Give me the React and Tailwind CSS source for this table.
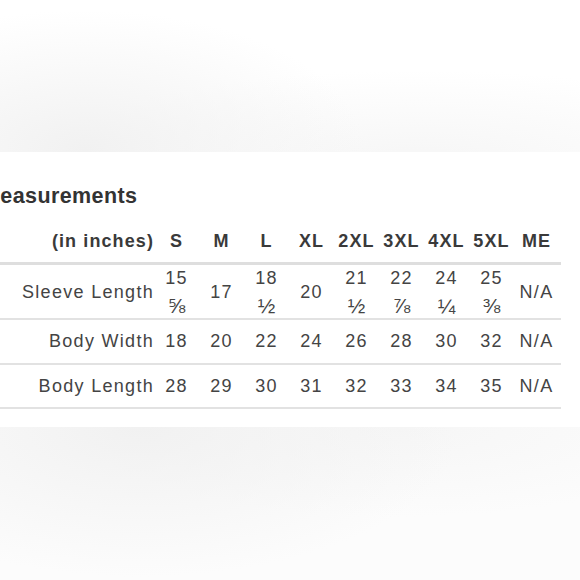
import React from "react";

const sizes = ["S", "M", "L", "XL", "2XL", "3XL", "4XL", "5XL", "ME"];

const rows = [
  {
    label: "Sleeve Length",
    h: "h-[55px] border-b-2",
    values: [
      ["15", "⅝"],
      ["17"],
      ["18", "½"],
      ["20"],
      ["21", "½"],
      ["22", "⅞"],
      ["24", "¼"],
      ["25", "⅜"],
      ["N/A"],
    ],
  },
  {
    label: "Body Width",
    h: "h-[45px] border-b-2",
    values: [["18"], ["20"], ["22"], ["24"], ["26"], ["28"], ["30"], ["32"], ["N/A"]],
  },
  {
    label: "Body Length",
    h: "h-[44px] border-b-2",
    values: [["28"], ["29"], ["30"], ["31"], ["32"], ["33"], ["34"], ["35"], ["N/A"]],
  },
];

const App = () => {
  return (
    <div className="w-[580px] h-[580px] flex flex-col overflow-hidden bg-white font-['Liberation_Sans',Arial,sans-serif]">
      {/* blurred top */}
      <div className="h-[152px] bg-white bg-[radial-gradient(ellipse_280px_140px_at_85px_150px,#f1f1f1,transparent),radial-gradient(ellipse_380px_90px_at_420px_160px,#f6f6f6,transparent)]" />

      {/* panel */}
      <div className="h-[275px] bg-white overflow-hidden">
        <h2 className="pt-[32px] leading-[24px] text-[21.5px] font-bold text-[#333] tracking-[0.4px] ml-[-18px]">
          Measurements
        </h2>

        <div className="mt-[12px] w-[561px]">
          <div className="grid grid-cols-[154px_repeat(9,45px)] items-center h-[45px] border-b-[3px] border-[#dedede] text-[18px] font-bold text-[#3a3a3a] tracking-[1.1px]">
            <div className="text-right">(in inches)</div>
            {sizes.map((s) => (
              <div key={s} className="text-center">
                {s}
              </div>
            ))}
          </div>

          {rows.map((r) => (
            <div
              key={r.label}
              className={`grid grid-cols-[154px_repeat(9,45px)] items-center border-[#e2e2e2] text-[18px] text-[#444] tracking-[1.3px] ${r.h}`}
            >
              <div className="text-right">{r.label}</div>
              {r.values.map((v, i) => (
                <div key={i} className="flex flex-col items-center leading-[27px]">
                  {v.map((t, j) => (
                    <span key={j} className={j === 1 ? "text-[21px] tracking-normal" : ""}>
                      {t}
                    </span>
                  ))}
                </div>
              ))}
            </div>
          ))}
        </div>
      </div>

      {/* blurred bottom */}
      <div className="flex-1 bg-[#fcfcfc] bg-[radial-gradient(ellipse_320px_150px_at_140px_0px,#f1f1f1,transparent),radial-gradient(ellipse_320px_90px_at_400px_0px,#f6f6f6,transparent)]" />
    </div>
  );
};

export default App;
